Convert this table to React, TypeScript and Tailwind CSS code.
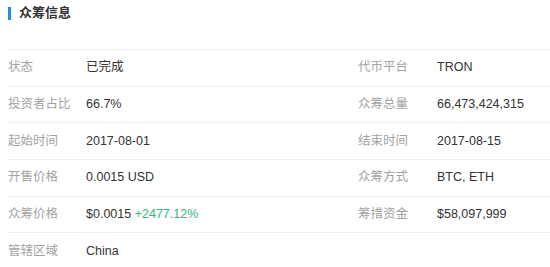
const rows: Array<[string, React.ReactNode, string?, React.ReactNode?]> = [
  ['状态', '已完成', '代币平台', 'TRON'],
  ['投资者占比', '66.7%', '众筹总量', '66,473,424,315'],
  ['起始时间', '2017-08-01', '结束时间', '2017-08-15'],
  ['开售价格', '0.0015 USD', '众筹方式', 'BTC, ETH'],
  [
    '众筹价格',
    <>
      $0.0015 <span className="text-[#2fb67c]">+2477.12%</span>
    </>,
    '筹措资金',
    '$58,097,999',
  ],
  ['管辖区域', 'China'],
];

export default function App() {
  return (
    <div
      className="h-[267px] w-[550px] overflow-hidden bg-white"
      style={{ fontFamily: '"Liberation Sans", "Noto Sans CJK SC", sans-serif' }}
    >
      {/* 标题 */}
      <div className="flex h-[49px] items-start pl-2 pt-[5px]">
        <span className="mt-[2px] h-[13px] w-[3px] bg-[#1e8fe6]" />
        <span className="ml-2 text-[13px] leading-[16px] font-bold text-[#333]">众筹信息</span>
      </div>

      <div className="ml-2">
        {rows.map(([l1, v1, l2, v2], i) => (
          <div key={i} className="flex h-[36.67px] items-center border-t border-[#efefef] text-[12.5px]">
            <div className="flex w-[267px] items-center">
              <span className="w-[78px] text-[#a3a3a3]">{l1}</span>
              <span className="text-[#333]">{v1}</span>
            </div>
            {l2 && (
              <div className="flex items-center">
                <span className="w-[133px] text-right text-[#a3a3a3]">{l2}</span>
                <span className="pl-[29px] text-[#333]">{v2}</span>
              </div>
            )}
          </div>
        ))}
      </div>
    </div>
  );
}
